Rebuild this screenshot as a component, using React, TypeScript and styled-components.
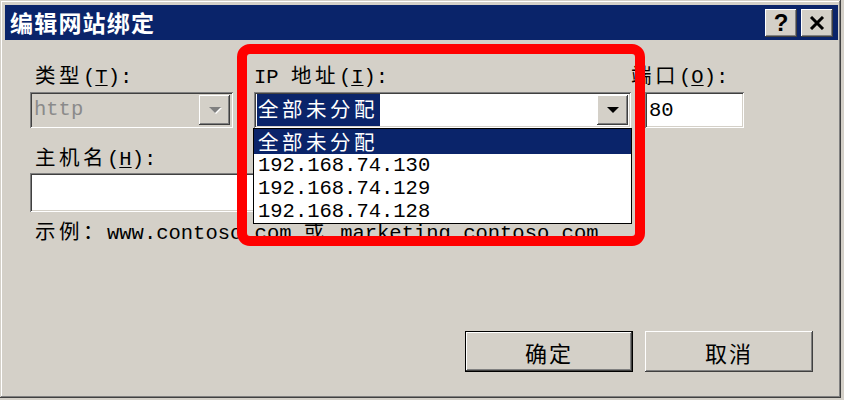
import React from 'react';
import styled, { createGlobalStyle, css } from 'styled-components';

const GlobalStyle = createGlobalStyle`
    html, body {
        margin: 0;
        padding: 0;
        background: #d4d0c8;
    }
    body {
        font-family: "Liberation Mono", "Noto Sans CJK SC", monospace;
        font-size: 20.5px;
        color: #000;
    }
`;

const raised = css`
    background: #d4d0c8;
    box-shadow: inset -1px -1px #404040, inset 1px 1px #ffffff, inset -2px -2px #808080, inset 2px 2px #d4d0c8;
`;

const sunken = css`
    box-shadow: inset 1px 1px #808080, inset -1px -1px #ffffff, inset 2px 2px #404040, inset -2px -2px #d4d0c8;
`;

const Window = styled.div`
    position: relative;
    width: 841px;
    height: 398px;
    box-sizing: border-box;
    padding: 5px 3px 2px 5px;
    display: flex;
    flex-direction: column;
    background: #d4d0c8;
    box-shadow: inset -1px -1px #404040, inset 1px 1px #d4d0c8, inset -2px -2px #808080, inset 2px 2px #ffffff;
`;

const TitleBar = styled.div`
    height: 35px;
    background: #0a246a;
    display: flex;
    align-items: center;
    justify-content: space-between;
    padding: 0 5px 0 5px;
`;

const Title = styled.div`
    color: #fff;
    font-family: "Noto Sans CJK SC", sans-serif;
    font-weight: 700;
    font-size: 23px;
    letter-spacing: 1.2px;
    line-height: 35px;
`;

const CaptionButtons = styled.div`
    display: flex;
    gap: 4px;
`;

const CaptionButton = styled.div`
    ${raised};
    width: 32px;
    height: 28px;
    display: flex;
    align-items: center;
    justify-content: center;
    font-family: "Liberation Sans", sans-serif;
    font-weight: 700;
    font-size: 24px;
    line-height: 1;
`;

const Body = styled.div`
    flex: 1;
    display: flex;
    flex-direction: column;
    padding: 22px 25px 24px 25px;
`;

const FieldRow = styled.div`
    display: flex;
    align-items: flex-start;
`;

const Field = styled.div<{ $width: number; $left?: number }>`
    position: relative;
    width: ${(p) => p.$width}px;
    margin-left: ${(p) => p.$left || 0}px;
    display: flex;
    flex-direction: column;
`;

const Label = styled.div<{ $indent?: number }>`
    height: 24px;
    line-height: 24px;
    padding-left: ${(p) => p.$indent ?? 5}px;
    white-space: nowrap;
    u {
        text-decoration-thickness: 1px;
        text-underline-offset: 2px;
    }
`;

const Han = styled.span`
    font-family: "Noto Sans CJK SC", sans-serif;
    letter-spacing: 3.5px;
`;

const Combo = styled.div<{ $disabled?: boolean }>`
    ${sunken};
    margin-top: 6px;
    height: 36px;
    box-sizing: border-box;
    padding: 3px 3px 3px 3px;
    display: flex;
    align-items: center;
    justify-content: space-between;
    background: ${(p) => (p.$disabled ? '#d4d0c8' : '#fff')};
    color: ${(p) => (p.$disabled ? '#8a8a8a' : '#000')};
`;

const ComboText = styled.span`
    padding-left: 1px;
    line-height: 28px;
`;

const Selected = styled.span`
    background: #0a246a;
    color: #fff;
    line-height: 28px;
    padding: 0 2px 0 1px;
`;

const DropButton = styled.div`
    ${raised};
    width: 31px;
    height: 30px;
    display: flex;
    align-items: center;
    justify-content: center;
`;

const TextBox = styled.div<{ $height: number; $mt: number }>`
    ${sunken};
    background: #fff;
    height: ${(p) => p.$height}px;
    margin-top: ${(p) => p.$mt}px;
    box-sizing: border-box;
    padding: 0 4px;
    display: flex;
    align-items: center;
`;

const ListBox = styled.div`
    position: absolute;
    left: -1px;
    top: 66px;
    width: 379px;
    box-sizing: border-box;
    border: 1px solid #000;
    background: #fff;
    z-index: 2;
`;

const ListItem = styled.div<{ $active?: boolean; $height: number }>`
    height: ${(p) => p.$height}px;
    line-height: ${(p) => p.$height}px;
    padding-left: 4px;
    background: ${(p) => (p.$active ? '#0a246a' : '#fff')};
    color: ${(p) => (p.$active ? '#fff' : '#000')};
`;

const HostLabel = styled(Label)`
    margin-top: 16px;
`;

const Example = styled.div`
    margin-top: 6px;
    padding-left: 5px;
    line-height: 24px;
    white-space: nowrap;
`;

const ButtonRow = styled.div`
    margin-top: auto;
    display: flex;
    justify-content: flex-end;
    gap: 12px;
`;

const PushButton = styled.div<{ $default?: boolean }>`
    ${raised};
    width: 168px;
    height: 41px;
    box-sizing: border-box;
    display: flex;
    align-items: center;
    justify-content: center;
    font-family: "Noto Sans CJK SC", sans-serif;
    font-size: 22px;
    letter-spacing: 2px;
    ${(p) =>
        p.$default &&
        css`
            box-shadow: inset 0 0 0 1px #000, inset -2px -2px #404040, inset 2px 2px #ffffff, inset -3px -3px #808080;
        `}
`;

const Highlight = styled.div`
    position: absolute;
    left: 237px;
    top: 44px;
    width: 408px;
    height: 202px;
    box-sizing: border-box;
    border: 10px solid #ff0000;
    border-radius: 13px;
    pointer-events: none;
    z-index: 3;
`;

const Arrow: React.FC<{ disabled?: boolean }> = ({ disabled }) => (
    <svg width="14" height="9" viewBox="0 0 14 9">
        {disabled && <polygon points="2,2 14,2 8,8" fill="#fff" />}
        <polygon points="1,1 13,1 7,7" fill={disabled ? '#808080' : '#000'} />
    </svg>
);

const App: React.FC = () => {
    return (
        <>
            <GlobalStyle />
            <Window>
                <TitleBar>
                    <Title>编辑网站绑定</Title>
                    <CaptionButtons>
                        <CaptionButton>?</CaptionButton>
                        <CaptionButton>
                            <svg width="16" height="14" viewBox="0 0 16 14">
                                <path d="M2 1 L14 13 M14 1 L2 13" stroke="#000" strokeWidth="3" />
                            </svg>
                        </CaptionButton>
                    </CaptionButtons>
                </TitleBar>
                <Body>
                    <FieldRow>
                        <Field $width={203}>
                            <Label>
                                <Han>类型</Han>(<u>T</u>):
                            </Label>
                            <Combo $disabled>
                                <ComboText>http</ComboText>
                                <DropButton>
                                    <Arrow disabled />
                                </DropButton>
                            </Combo>
                        </Field>
                        <Field $width={377} $left={21}>
                            <Label $indent={0}>
                                IP <Han>地址</Han>(<u>I</u>):
                            </Label>
                            <Combo>
                                <Selected>
                                    <Han>全部未分配</Han>
                                </Selected>
                                <DropButton>
                                    <Arrow />
                                </DropButton>
                            </Combo>
                            <ListBox>
                                <ListItem $active $height={25}>
                                    <Han>全部未分配</Han>
                                </ListItem>
                                <ListItem $height={23}>192.168.74.130</ListItem>
                                <ListItem $height={23}>192.168.74.129</ListItem>
                                <ListItem $height={23}>192.168.74.128</ListItem>
                            </ListBox>
                        </Field>
                        <Field $width={113}>
                            <Label $indent={0}>
                                <Han>端口</Han>(<u>O</u>):
                            </Label>
                            <TextBox $height={36} $mt={6} style={{ marginLeft: 14 }}>
                                80
                            </TextBox>
                        </Field>
                    </FieldRow>
                    <HostLabel>
                        <Han>主机名</Han>(<u>H</u>):
                    </HostLabel>
                    <TextBox $height={39} $mt={5} style={{ width: 600 }} />
                    <Example>
                        <Han>示例：</Han>www.contoso.com <Han>或</Han> marketing.contoso.com
                    </Example>
                    <ButtonRow>
                        <PushButton $default>确定</PushButton>
                        <PushButton>取消</PushButton>
                    </ButtonRow>
                </Body>
                <Highlight />
            </Window>
        </>
    );
};

export default App;
